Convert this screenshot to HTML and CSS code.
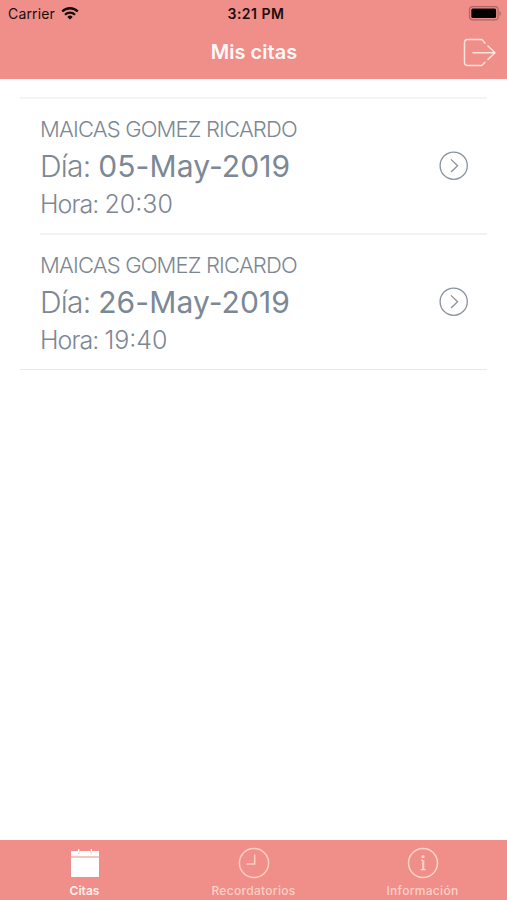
FILE: index.html
```html
<!DOCTYPE html>
<html lang="es">
<head>
<meta charset="utf-8">
<title>Mis citas</title>
<link rel="stylesheet" href="styles.css">
</head>
<body>
<header class="top">
  <div class="status">
    <div class="carrier"><span>Carrier</span>
      <svg class="wifi" width="18" height="13" viewBox="0 0 18 13" fill="none" stroke="#170b0b" stroke-width="2.3"><path d="M1.2 4.500a11 11 0 0 1 15.6 0M4 7.700a7.1 7.1 0 0 1 10 0"/><path d="M9 12.600 6.300 9.900a3.800 3.800 0 0 1 5.400 0Z" fill="#170b0b" stroke="none"/></svg>
    </div>
    <span class="time">3:21 PM</span>
    <svg class="battery" width="33" height="15" viewBox="0 0 33 15"><rect x="1.500" y=".7" width="28.600" height="13.200" rx="3.200" fill="none" stroke="#a96564" stroke-width="1.200"/><rect x="3.300" y="2.500" width="24.800" height="9.500" rx="1.500" fill="#050202"/><path d="M31.500 5v5c1.800-.8 1.800-4.200 0-5Z" fill="#a96564"/></svg>
  </div>
  <div class="nav">
    <h1>Mis citas</h1>
    <svg class="logout" width="34" height="30" viewBox="0 0 34 30" fill="none" stroke="#ffe2da" stroke-width="1.5" stroke-linecap="round" stroke-linejoin="round"><path d="M22 5.300 19.800 2.400Q19.100 1.500 17.900 1.500H4.500Q1.500 1.500 1.500 4.500V24.500Q1.500 27.500 4.500 27.500H17.900Q19.100 27.500 19.800 26.600L22 24.300M10 14.700H32M25 8l7 6.700-7 6.700"/></svg>
  </div>
</header>
<main class="list">
  <article class="row">
    <div class="info">
      <p class="name">MAICAS GOMEZ RICARDO</p>
      <p class="day">Día: <span class="date">05-May-2019</span></p>
      <p class="hour">Hora: <span class="clock">20:30</span></p>
    </div>
    <svg class="go" width="30" height="30" viewBox="0 0 30 30" fill="none" stroke="#8b939d" stroke-width="1.3"><circle cx="14.700" cy="14.700" r="13.600"/><path d="m12 8.400 6.600 6.300-6.600 6.300"/></svg>
  </article>
  <article class="row">
    <div class="info">
      <p class="name">MAICAS GOMEZ RICARDO</p>
      <p class="day">Día: <span class="date">26-May-2019</span></p>
      <p class="hour">Hora: <span class="clock">19:40</span></p>
    </div>
    <svg class="go" width="30" height="30" viewBox="0 0 30 30" fill="none" stroke="#8b939d" stroke-width="1.3"><circle cx="14.700" cy="14.700" r="13.600"/><path d="m12 8.400 6.600 6.300-6.600 6.300"/></svg>
  </article>
</main>
<nav class="tabs">
  <div class="tab active">
    <svg width="32" height="32" viewBox="0 0 32 32"><path d="M2 4H9V6.500H10.500V4H21.500V6.500H23V4H30V9H2ZM2 10.500H30V30H2Z" fill="#fff"/><path d="M2 9.700H30" stroke="#f9c5bf" stroke-width="1.500"/><path d="M9.700 2V6M22.300 2V6" stroke="#fff" stroke-width="1.300"/></svg>
    <span>Citas</span>
  </div>
  <div class="tab">
    <svg width="32" height="32" viewBox="0 0 32 32" fill="none" stroke="#ffcfc1" stroke-width="1.500"><circle cx="16" cy="16" r="14.600"/><path d="M16.700 7.500V17H8.500"/></svg>
    <span class="wide">Recordatorios</span>
  </div>
  <div class="tab">
    <svg width="32" height="32" viewBox="0 0 32 32" fill="none" stroke="#ffd3c8" stroke-width="1.500"><circle cx="16" cy="16" r="14.500"/><path d="M16.200 13V22.500" stroke-width="2.200"/><path d="M14 13.300H16M13.700 22.600H18.700" stroke-width="1.200"/><circle cx="16" cy="9.700" r="1.600" fill="#ffd3c8" stroke="none"/></svg>
    <span class="wide">Información</span>
  </div>
</nav>
</body>
</html>
```
FILE: styles.css
```css
* { box-sizing: border-box; }
body {
  margin: 0;
  height: 900px;
  display: flex;
  flex-direction: column;
  background: #fff;
  font-family: Inter, "Liberation Sans", sans-serif;
  overflow: hidden;
}
.top { height: 79px; background: #f08e8a; flex: none; }
.status {
  height: 27px;
  padding: 0 6px 0 8px;
  display: grid;
  grid-template-columns: 1fr auto 1fr;
  align-items: center;
  color: #1c0d0d;
  font-size: 14px;
}
.carrier { display: flex; align-items: center; gap: 6px; letter-spacing: 0.15px; }
.time { padding-left: 3px; font-weight: 600; letter-spacing: 0.5px; }
.battery { justify-self: end; }
.nav {
  height: 52px;
  padding: 0 10px;
  display: grid;
  grid-template-columns: 1fr auto 1fr;
  align-items: center;
}
h1 {
  grid-column: 2;
  margin: 0;
  padding-bottom: 2px;
  padding-left: 1px;
  color: #fff8f6;
  font-size: 20px;
  line-height: 48px;
  font-weight: 600;
  letter-spacing: 0.05px;
}
.logout { justify-self: end; }
.list {
  flex: 1;
  margin: 18px 20px 0;
  border-top: 2px solid #f2f4f5;
}
.row {
  height: 136px;
  margin-left: 20px;
  padding-right: 18px;
  display: flex;
  justify-content: space-between;
  border-bottom: 2px solid #f1f2f3;
}
.row:last-child {
  height: 135px;
  margin-left: 0;
  padding-left: 20px;
  border-bottom: 1px solid #e9e9ea;
}
.info { padding-top: 14px; white-space: nowrap; }
p { margin: 0; color: #7d8793; font-weight: 300; }
.name { font-size: 22px; line-height: 32px; letter-spacing: -0.83px; }
.day { font-size: 30px; line-height: 42px; letter-spacing: -0.75px; }
.date { font-weight: 400; color: #7b8896; letter-spacing: 0.1px; }
.hour { padding-top: 1px; font-size: 25px; line-height: 32px; letter-spacing: -0.95px; }
.clock { letter-spacing: 0; }
.go { margin-top: 52px; }
.tabs {
  height: 60px;
  flex: none;
  display: grid;
  grid-template-columns: repeat(3, 1fr);
  background: #f08e8a;
}
.tab {
  display: flex;
  flex-direction: column;
  align-items: center;
  padding-top: 7px;
  color: #ffd0c5;
  font-size: 12px;
  font-weight: 500;
  line-height: 15px;
}
.tab span { margin-top: 4px; }
.tab .wide { letter-spacing: 0.3px; }
.active { color: #fff0eb; font-weight: 600; }
```
